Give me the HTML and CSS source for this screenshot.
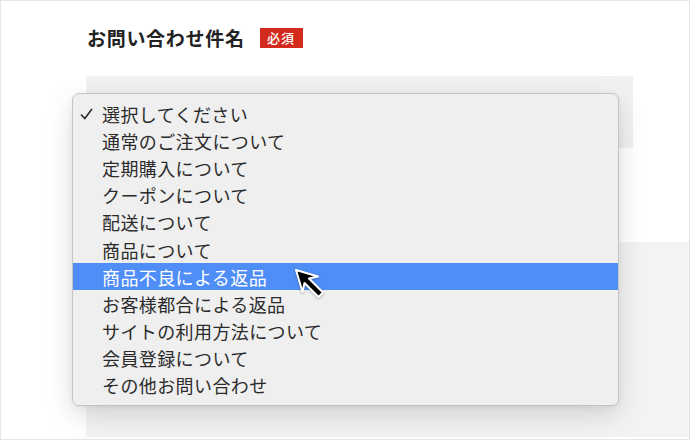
FILE: index.html
```html
<!DOCTYPE html>
<html lang="ja">
<head>
<meta charset="UTF-8">
<meta name="viewport" content="width=device-width, initial-scale=1.0">
<title>お問い合わせ件名</title>
<link rel="stylesheet" href="styles.css">
</head>
<body>

<div class="frame">
    <div class="field-head">
        <h2 class="field-title">お問い合わせ件名</h2>
        <span class="badge">必須</span>
    </div>

    <div class="select-box"></div>
    <div class="next-block"></div>

    <ul class="dropdown">
        <li class="option selected">
            <span class="check">
                <svg width="13" height="12" viewBox="0 0 13 12"><polyline points="1,6.5 4.8,10.5 12,1" fill="none" stroke="#2b2b2b" stroke-width="1.6"/></svg>
            </span>
            選択してください
        </li>
        <li class="option"><span class="check"></span>通常のご注文について</li>
        <li class="option"><span class="check"></span>定期購入について</li>
        <li class="option"><span class="check"></span>クーポンについて</li>
        <li class="option"><span class="check"></span>配送について</li>
        <li class="option"><span class="check"></span>商品について</li>
        <li class="option hover"><span class="check"></span>商品不良による返品</li>
        <li class="option"><span class="check"></span>お客様都合による返品</li>
        <li class="option"><span class="check"></span>サイトの利用方法について</li>
        <li class="option"><span class="check"></span>会員登録について</li>
        <li class="option"><span class="check"></span>その他お問い合わせ</li>
    </ul>

    <svg class="cursor" width="36" height="36" viewBox="0 0 36 36">
        <polygon points="3,3 25,9.5 16,11.5 30,25.5 25.5,30 11.5,16 9.5,25"
                 fill="#000" stroke="#fff" stroke-width="2" stroke-linejoin="round"/>
    </svg>
</div>

</body>
</html>
```

FILE: styles.css
```css
body {
    margin: 0;
    padding: 0;
    background-color: #fff;
    font-family: "Noto Sans CJK JP", "Noto Sans", sans-serif;
}
.frame {
    position: relative;
    width: 690px;
    height: 440px;
    box-sizing: border-box;
    border: 1px solid #e6e6e6;
    background-color: #fff;
    overflow: hidden;
}
.field-head {
    display: flex;
    align-items: center;
    gap: 15px;
    padding: 27px 0 0 86px;
}
.field-title {
    margin: 0;
    font-size: 19px;
    line-height: 20px;
    letter-spacing: 0.7px;
    font-weight: bold;
    color: #222;
}
.badge {
    display: inline-block;
    width: 43px;
    height: 20px;
    line-height: 20px;
    text-align: center;
    background-color: #d42a1c;
    color: #fff;
    font-size: 13px;
    font-weight: 500;
    letter-spacing: 1px;
}
.select-box {
    margin: 28px 0 0 85px;
    width: 547px;
    height: 72px;
    background-color: #f1f1f1;
}
.next-block {
    margin: 94px 0 0 85px;
    height: 195px;
    background-color: #f3f3f3;
}
.dropdown {
    position: absolute;
    left: 71px;
    top: 92px;
    width: 547px;
    height: 313px;
    box-sizing: border-box;
    margin: 0;
    padding: 6px 0 0;
    list-style: none;
    background-color: #efefef;
    border: 1px solid #c4c4c4;
    border-radius: 7px;
    box-shadow: 0 10px 28px rgba(0, 0, 0, 0.13), 0 2px 6px rgba(0, 0, 0, 0.06);
}
.option {
    display: flex;
    align-items: center;
    height: 27.2px;
    padding-left: 7px;
    font-size: 18px;
    letter-spacing: 0.4px;
    color: #2b2b2b;
    white-space: nowrap;
}
.check {
    display: flex;
    align-items: center;
    width: 22px;
    flex-shrink: 0;
}
.option.hover {
    background-color: #4f8ef6;
    color: #fff;
}
.cursor {
    position: absolute;
    left: 292px;
    top: 266px;
    filter: drop-shadow(0 1px 1px rgba(0, 0, 0, 0.3));
}
```
